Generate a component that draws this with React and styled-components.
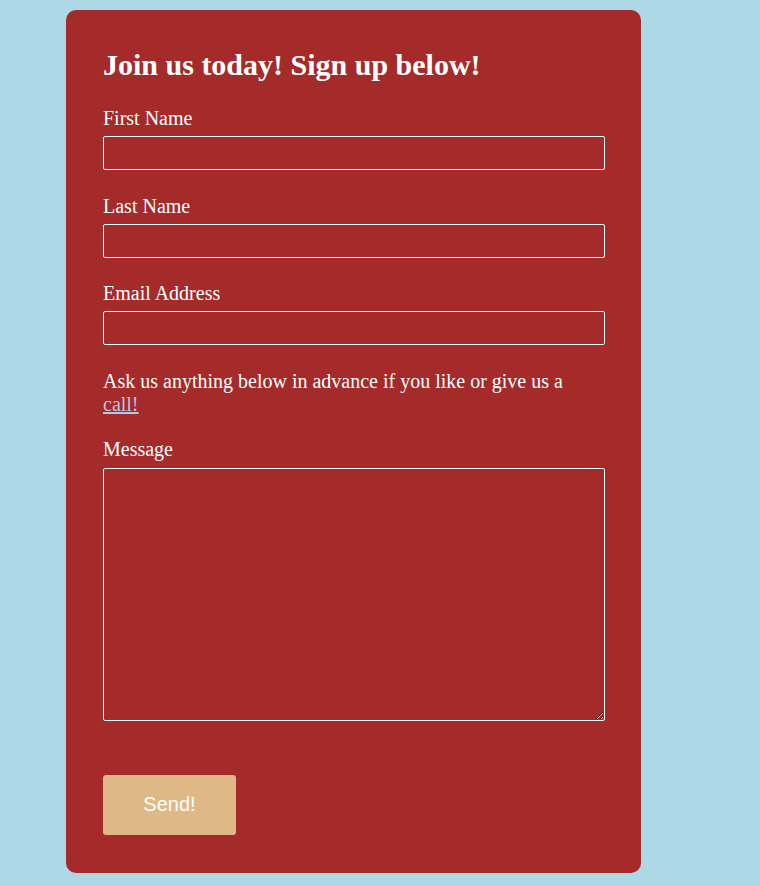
import React from "react";
import styled, { createGlobalStyle } from "styled-components";

const Global = createGlobalStyle`
  html, body { margin: 0; padding: 0; }
  body {
    background: #add8e6;
    font-family: "Liberation Serif", "Times New Roman", serif;
  }
`;

const Page = styled.div`
  box-sizing: border-box;
  min-height: 886px;
  padding: 10px 0 13px 66px;
  border-bottom: 1px solid #a3a9ad;
`;

const Card = styled.form`
  box-sizing: border-box;
  width: 575px;
  background: #a52a2a;
  border-radius: 10px;
  padding: 39px 36px 38px 37px;
  color: #fff;
  display: flex;
  flex-direction: column;
`;

const Title = styled.h2`
  margin: 0 0 26px;
  font-size: 30px;
  font-weight: bold;
  line-height: 32px;
`;

const Field = styled.div`
  display: flex;
  flex-direction: column;
  margin-bottom: ${(p) => p.$gap || 24.5}px;
`;

const Label = styled.label`
  font-size: 20px;
  line-height: 23px;
  margin-bottom: ${(p) => p.$space || 6}px;
`;

const Input = styled.input`
  box-sizing: border-box;
  width: 502px;
  height: 34px;
  background: transparent;
  border: 1px solid #fff;
  border-radius: 2px;
  color: #fff;
  font-size: 16px;
  outline: none;
`;

const TextArea = styled.textarea`
  box-sizing: border-box;
  width: 502px;
  height: 253px;
  background: transparent;
  border: 1px solid #fff;
  border-radius: 2px;
  color: #fff;
  outline: none;
`;

const Note = styled.p`
  margin: 0 0 22px;
  max-width: 480px;
  font-size: 20px;
  line-height: 23px;
`;

const Link = styled.a`
  color: #bcc4e2;
  text-decoration: underline;
`;

const Button = styled.button`
  width: 133px;
  height: 60px;
  background: #deb887;
  border: none;
  border-radius: 3px;
  color: #fff;
  font-family: "Liberation Sans", Arial, sans-serif;
  font-size: 20px;
  cursor: pointer;
`;

export default function App() {
  return (
    <>
      <Global />
      <Page>
        <Card onSubmit={(e) => e.preventDefault()}>
          <Title>Join us today! Sign up below!</Title>
          <Field>
            <Label>First Name</Label>
            <Input type="text" />
          </Field>
          <Field>
            <Label>Last Name</Label>
            <Input type="text" />
          </Field>
          <Field>
            <Label>Email Address</Label>
            <Input type="email" />
          </Field>
          <Note>
            Ask us anything below in advance if you like or give us a{" "}
            <Link href="#">call!</Link>
          </Note>
          <Field $gap={54}>
            <Label $space={7}>Message</Label>
            <TextArea />
          </Field>
          <div>
            <Button type="submit">Send!</Button>
          </div>
        </Card>
      </Page>
    </>
  );
}
